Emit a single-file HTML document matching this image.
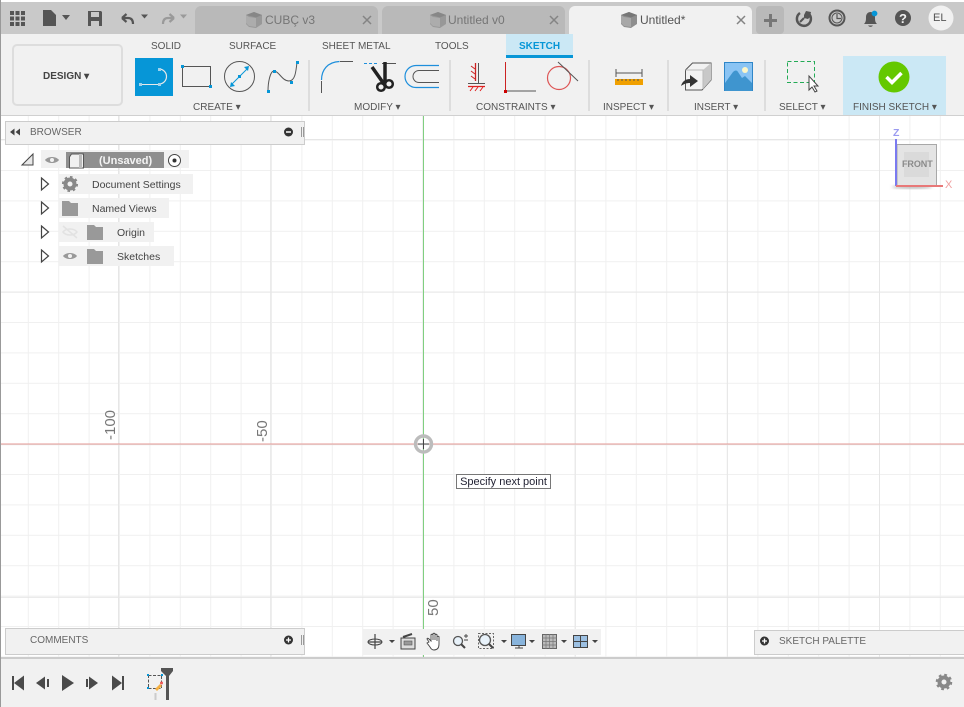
<!DOCTYPE html>
<html><head><meta charset="utf-8"><style>
html,body{margin:0;padding:0;background:#fff}
#p{position:relative;width:964px;height:707px;overflow:hidden;background:#fff;font-family:"Liberation Sans",sans-serif;color:#555}
.a{position:absolute}
.t{position:absolute;white-space:nowrap;font-size:10px;line-height:12px;color:#555}
.tab{position:absolute;top:6px;height:28px;width:183px;background:#b9b9b9;border-radius:6px 6px 0 0}
.tab span{position:absolute;top:7px;font-size:12px;line-height:15px;color:#757575}
.sep{position:absolute;top:60px;width:2px;height:51px;background:#ddd}
.row{position:absolute;background:#f1f1f1;height:20px}
svg{position:absolute;overflow:visible}
</style></head><body><div id="p">
<svg style="left:0;top:0" width="964" height="707">
<defs>
<pattern id="g" x="27.8" y="18" width="30.4" height="30.4" patternUnits="userSpaceOnUse"><path d="M.5 0V30.4M0 .5H30.4" stroke="#f0f0f0" fill="none"/></pattern>
<pattern id="m" x="118" y="139" width="152.2" height="152.6" patternUnits="userSpaceOnUse"><path d="M.5 0V153M0 .5H153" stroke="#e6e6e6" fill="none"/></pattern>
<filter id="b"><feGaussianBlur stdDeviation="1.500"/></filter>
</defs>
<rect width="964" height="707" fill="url(#g)"/><rect width="964" height="707" fill="url(#m)"/>
<path d="M423.500 115V658" stroke="#80cf80"/><path d="M0 444H964" stroke="#e59a96" stroke-width="1"/>
<circle cx="423.500" cy="444" r="8" fill="none" stroke="#bcbcbc" stroke-width="3.400"/>
<path d="M423.500 439V449M418 444H429" stroke="#444"/>
</svg>
<div class="a" style="left:0;top:0;width:1px;height:707px;background:#999;z-index:9"></div>
<div class="t" style="left:103px;top:408px;width:16px;height:32px;font-size:15px;color:#777;writing-mode:vertical-rl;transform:rotate(180deg);line-height:16px;text-align:left">-100</div>
<div class="t" style="left:255px;top:418px;width:16px;height:24px;font-size:15px;color:#777;writing-mode:vertical-rl;transform:rotate(180deg);line-height:16px">-50</div>
<div class="t" style="left:426px;top:598px;width:16px;height:18px;font-size:15px;color:#777;writing-mode:vertical-rl;transform:rotate(180deg);line-height:16px">50</div>
<div class="t" style="left:456px;top:474px;width:93px;height:13px;border:1px solid #777;background:#fff;color:#223;font-size:11px;line-height:14px;text-align:center">Specify next point</div>

<!-- top bar -->
<div class="a" style="left:0;top:0;width:964px;height:2px;background:#fff"></div>
<div class="a" style="left:0;top:2px;width:964px;height:32px;background:#c9c9c9"></div>
<svg style="left:0;top:0" width="200" height="34">
<g fill="#555"><path d="M10 11h4v4h-4zM15.500 11h4v4h-4zM21 11h4v4h-4zM10 16.500h4v4h-4zM15.500 16.500h4v4h-4zM21 16.500h4v4h-4zM10 22h4v4h-4zM15.500 22h4v4h-4zM21 22h4v4h-4z"/>
<path d="M43 10h8l5 5v11H43z"/><path d="M62 15h8l-4 5z"/>
<path d="M88 11h13l1 1v14H88zM91 12v5h8v-5zM91 21v5h8v-5z" fill-rule="evenodd"/>
<path d="M141 14.500h7l-3.500 4z"/></g>
<path d="M123 18h5c4 0 5 3 5 6M122 18l4.500-4M122 18l4.500 4" fill="none" stroke="#555" stroke-width="2.200"/>
<path d="M173 18h-5c-4 0-5 3-5 6M174 18l-4.500-4M174 18l-4.500 4" fill="none" stroke="#9a9a9a" stroke-width="2.200"/>
<path d="M180 14.500h7l-3.500 4z" fill="#9a9a9a"/>
</svg>
<div class="tab" style="left:195px"><span style="left:70px">CUBÇ v3</span></div>
<div class="tab" style="left:382px"><span style="left:66px">Untitled v0</span></div>
<div class="tab" style="left:569px;background:#f1f1f1"><span style="left:71px;color:#555">Untitled*</span></div>
<svg style="left:0;top:0" width="964" height="34">
<defs><g id="cube"><path d="M1 3l8-3 8 3v9l-6 4-7-1-3-3z" fill="#8e8e8e"/><path d="M4 5l7 1v9l-7-1-3-3V3z" fill="#a8a8a8"/><path d="M1 3l8-3 8 3-6 2.500z" fill="#777"/></g>
<g id="x"><path d="M0 0l8 8M8 0l-8 8" stroke="#848484" stroke-width="1.500"/></g></defs>
<use href="#cube" x="245" y="12" opacity=".75"/><use href="#cube" x="429" y="12" opacity=".75"/><use href="#cube" x="620" y="12"/>
<use href="#x" x="363" y="16"/><use href="#x" x="550" y="16"/><use href="#x" x="737" y="16"/>
<rect x="756" y="6" width="28" height="28" rx="4" fill="#b9b9b9"/>
<path d="M764 20.500h13M770.500 14v13" stroke="#777" stroke-width="3"/>
<path d="M800 13a7 7 0 1 0 9 1" fill="none" stroke="#555" stroke-width="2.500"/><path d="M806 11l5 1-1 5-2 2-4-1 0-3z" fill="#555"/><path d="M800 22l4-4" stroke="#555" stroke-width="2"/>
<circle cx="837" cy="18" r="7.500" fill="none" stroke="#555" stroke-width="2"/><circle cx="837" cy="18" r="5" fill="none" stroke="#555"/><path d="M837 14v4.500h4" fill="none" stroke="#555" stroke-width="1.200"/>
<path d="M864 24c2-2 2-4 2-7 0-3 2-5 4.500-5s4.500 2 4.500 5c0 3 0 5 2 7zM868 25.500a3 3 0 0 0 5 0z" fill="#555"/><circle cx="874.500" cy="13.500" r="2.900" fill="#0696d7"/>
<circle cx="903" cy="18" r="8" fill="#555"/>
<circle cx="941" cy="18" r="12.500" fill="#f1f1f1"/>
</svg>
<div class="t" style="left:899px;top:11px;font-size:13px;line-height:15px;font-weight:bold;color:#f1f1f1">?</div>
<div class="t" style="left:933px;top:12px;font-size:11px;line-height:13px;color:#555">EL</div>

<!-- ribbon -->
<div class="a" style="left:0;top:34px;width:964px;height:81px;background:#f1f1f1;border-bottom:1px solid #d0d0d0"></div>
<div class="a" style="left:12px;top:44px;width:107px;height:58px;border:2px solid #ddd;border-radius:5px"></div>
<div class="t" style="left:43px;top:71px;font-weight:bold;color:#444;font-size:10px">DESIGN ▾</div>
<div class="t" style="left:151px;top:41px">SOLID</div>
<div class="t" style="left:229px;top:41px">SURFACE</div>
<div class="t" style="left:322px;top:41px">SHEET METAL</div>
<div class="t" style="left:435px;top:41px">TOOLS</div>
<div class="a" style="left:506px;top:34px;width:67px;height:21px;background:#cbe8f5"></div>
<div class="a" style="left:506px;top:55px;width:67px;height:3px;background:#0696d7"></div>
<div class="t" style="left:519px;top:41px;font-weight:bold;color:#0696d7;font-size:10px">SKETCH</div>
<div class="a" style="left:843px;top:56px;width:103px;height:59px;background:#cbe8f5"></div>
<div class="a" style="left:135px;top:58px;width:38px;height:38px;background:#0696d7"></div>
<div class="sep" style="left:308px"></div><div class="sep" style="left:449px"></div><div class="sep" style="left:588px"></div><div class="sep" style="left:667px"></div><div class="sep" style="left:764px"></div>
<div class="t" style="left:193px;top:102px">CREATE ▾</div>
<div class="t" style="left:354px;top:102px">MODIFY ▾</div>
<div class="t" style="left:476px;top:102px">CONSTRAINTS ▾</div>
<div class="t" style="left:603px;top:102px">INSPECT ▾</div>
<div class="t" style="left:694px;top:102px">INSERT ▾</div>
<div class="t" style="left:779px;top:102px">SELECT ▾</div>
<div class="t" style="left:853px;top:102px">FINISH SKETCH ▾</div>
<svg style="left:0;top:0" width="964" height="115">
<!-- line -->
<path d="M141 84.500h18" stroke="#e8e8e8" fill="none"/><path d="M159 69a7.500 7.500 0 0 1 0 15" stroke="#e8e8e8" fill="none" stroke-width="1.200"/>
<path d="M139 83h3v3h-3zM158 83h3v3h-3zM158 68h3v3h-3z" fill="#9fd3ee"/>
<!-- rect -->
<rect x="182.500" y="66.500" width="28" height="20" fill="none" stroke="#555"/>
<path d="M181 65h3v3h-3zM209 85h3v3h-3z" fill="#0696d7"/>
<!-- circle -->
<circle cx="239.500" cy="76.500" r="15" fill="none" stroke="#555"/>
<path d="M231 85l17-17" stroke="#0696d7"/><path d="M230 87l1-5 4 4zM249 66l-1 5-4-4z" fill="#0696d7"/><rect x="238" y="75" width="3" height="3" fill="#0696d7"/>
<!-- spline -->
<path d="M268 91c0-8 2-20 6-20 5 0 8 10 15 10 6 0 7-9 8-19" fill="none" stroke="#555"/>
<path d="M267 90h3v3h-3zM273 70h3v3h-3zM290 81h3v3h-3zM296 61h3v3h-3z" fill="#0696d7"/>
<!-- fillet -->
<path d="M321.500 80c0-10 6-18 18-18.500" fill="none" stroke="#1e8fdc" stroke-width="1.200"/><path d="M321.500 81v12M340 61.500h13" stroke="#555"/>
<!-- scissors -->
<path d="M364 63.500h14" stroke="#1e8fdc" stroke-dasharray="3 2"/><path d="M382 63.500h14" stroke="#555"/>
<path d="M372 67l12 17M385 62v20" stroke="#222" stroke-width="3.500"/>
<circle cx="381" cy="87" r="3.800" fill="none" stroke="#222" stroke-width="2.500"/><circle cx="389" cy="84" r="3.800" fill="none" stroke="#222" stroke-width="2.500"/>
<!-- offset -->
<path d="M439 65.500h-23a11 11 0 0 0 0 22h23" fill="none" stroke="#1e8fdc" stroke-width="1.200"/>
<path d="M439 70.500h-20a6 6 0 0 0 0 12h20" fill="none" stroke="#555"/>
<!-- constraints -->
<path d="M478.500 63v20M468 83.500h17" stroke="#555"/><path d="M475.500 63v18" stroke="#c22" stroke-width="1.300"/><path d="M471 66l4 3M471 71l4 3M471 76l4 3" stroke="#c22"/><path d="M468 86.500h17" stroke="#e02020" stroke-width="1.200"/><path d="M470 91l3-4M475 91l3-4M480 91l3-4" stroke="#e02020"/>
<path d="M505.500 62v28" stroke="#c22"/><path d="M507 91h29" stroke="#555"/><rect x="504" y="90" width="3" height="3" fill="#c00"/>
<circle cx="559" cy="78" r="11.500" fill="none" stroke="#d55" stroke-width="1.200"/><path d="M558 62l20 19" stroke="#555"/>
<!-- inspect -->
<path d="M616 73h26M616 69v8M642 69v8" stroke="#555"/><rect x="615" y="79" width="28" height="6" fill="#f0a000"/>
<path d="M618 79v2M622 79v2M626 79v2M630 79v2M634 79v2M638 79v2" stroke="#555"/>
<!-- insert -->
<path d="M685.500 70l7-7h18.500v17l-9 10h-16.500z" fill="#f2f2f2" stroke="#555"/><path d="M703 70l8-7v17l-8 9z" fill="#c8c8c8"/><path d="M685.500 70h17.500v19" fill="none" stroke="#bbb"/>
<path d="M681 86c1-4 4-7 9-7v-4l8 6-8 6v-4c-4 0-6 1-9 3z" fill="#333"/>
<rect x="724.500" y="62.500" width="28" height="28" fill="#8ac4f4" stroke="#2f86c8"/>
<path d="M725 83l8-11c2-2 4-2 5 0l4 6 3-2 7 7v8h-27z" fill="#3f95cf"/><circle cx="745" cy="70" r="3" fill="#fdf6c8"/>
<!-- select -->
<rect x="787.500" y="61.500" width="27" height="21" fill="none" stroke="#22aa55" stroke-dasharray="4 2.500"/>
<path d="M809 76v14l3-3 3 5 2-1-3-5h4z" fill="#fff" stroke="#444"/>
<!-- finish -->
<circle cx="894" cy="77" r="15.500" fill="#64c800"/><path d="M886.500 77l5.500 5.500 9.500-9.500" fill="none" stroke="#fff" stroke-width="3.500"/>
</svg>

<!-- browser -->
<div class="a" style="left:5px;top:121px;width:298px;height:22px;background:#f1f1f1;border:1px solid #ccc"></div>
<div class="t" style="left:30px;top:127px;color:#666">BROWSER</div>
<div class="a" style="left:41px;top:150px;width:148px;height:18px;background:#f1f1f1"></div>
<div class="a" style="left:66px;top:152px;width:98px;height:16px;background:#8f8f8f"></div>
<div class="t" style="left:99px;top:155px;font-size:11px;font-weight:bold;color:#f4f4f4">(Unsaved)</div>
<div class="row" style="left:59px;top:174px;width:134px"></div>
<div class="row" style="left:59px;top:198px;width:110px"></div>
<div class="row" style="left:59px;top:222px;width:95px"></div>
<div class="row" style="left:59px;top:246px;width:115px"></div>
<div class="t" style="left:92px;top:179px;font-size:10.500px;color:#444">Document Settings</div>
<div class="t" style="left:92px;top:203px;font-size:10.500px;color:#444">Named Views</div>
<div class="t" style="left:117px;top:227px;font-size:10.500px;color:#444">Origin</div>
<div class="t" style="left:117px;top:251px;font-size:10.500px;color:#444">Sketches</div>
<svg style="left:0;top:115px" width="310" height="160">
<path d="M10 17l4.500-3.500v7zM15.500 17l4.500-3.500v7z" fill="#444"/>
<circle cx="288.500" cy="17" r="4.500" fill="#333"/><path d="M286 17h5" stroke="#fff" stroke-width="1.500"/>
<path d="M301.500 12v10M303.500 12v10" stroke="#999"/>
<path d="M22 50l11-11v11z" fill="#e8e8e8" stroke="#444"/>
<g id="e"><path d="M45 45c3-4 11-4 14 0-3 4-11 4-14 0z" fill="#999"/><circle cx="52" cy="45" r="2" fill="#f1f1f1"/></g>
<path d="M71.500 39h12v14h-14v-11z" fill="#f0f0f0" stroke="#555"/><path d="M80.500 39v14" stroke="#bbb" stroke-width="3"/>
<circle cx="174.500" cy="45.500" r="6" fill="#fff" stroke="#444"/><circle cx="174.500" cy="45.500" r="2" fill="#333"/>
<path d="M41.500 63l7 6-7 6zM41.500 87l7 6-7 6zM41.500 111l7 6-7 6zM41.500 135l7 6-7 6z" fill="#fff" stroke="#444" stroke-width="1.200"/>
<circle cx="70" cy="69" r="4.500" fill="none" stroke="#888" stroke-width="4"/><circle cx="70" cy="69" r="6.800" fill="none" stroke="#888" stroke-width="2.500" stroke-dasharray="2.500 2.800"/>
<path d="M62 86h7l2 2h7v13H62z" fill="#999"/><path d="M87 110h7l2 2h7v13H87z" fill="#999"/><path d="M87 134h7l2 2h7v13H87z" fill="#999"/>
<path d="M63 117c3-4 11-4 14 0-3 4-11 4-14 0zM63 111l14 12" fill="none" stroke="#e2e2e2" stroke-width="1.500"/>
<path d="M63 141c3-4 11-4 14 0-3 4-11 4-14 0z" fill="#999"/><circle cx="70" cy="141" r="2" fill="#f1f1f1"/>
</svg>

<!-- bottom panels -->
<div class="a" style="left:5px;top:628px;width:298px;height:25px;background:#f1f1f1;border:1px solid #ccc"></div>
<div class="t" style="left:30px;top:635px;color:#666">COMMENTS</div>
<div class="a" style="left:754px;top:630px;width:210px;height:23px;background:#f1f1f1;border:1px solid #ccc"></div>
<div class="t" style="left:779px;top:636px;color:#666">SKETCH PALETTE</div>
<div class="a" style="left:363px;top:629px;width:238px;height:26px;background:#f1f1f1"></div>
<div class="a" style="left:0;top:657px;width:964px;height:50px;background:#f1f1f1;border-top:2px solid #ccc;box-sizing:border-box"></div>
<svg style="left:0;top:0" width="964" height="707">
<circle cx="288.500" cy="640" r="4.500" fill="#333"/><path d="M286 640h5M288.500 637.500v5" stroke="#fff" stroke-width="1.300"/>
<path d="M301.500 635v10M303.500 635v10" stroke="#999"/>
<circle cx="764.500" cy="641" r="4.500" fill="#333"/><path d="M762 641h5M764.500 638.500v5" stroke="#fff" stroke-width="1.300"/>
<!-- nav bar -->
<path d="M368 642h14M375 634v15" stroke="#444" stroke-width="1.200"/><ellipse cx="375" cy="642" rx="7" ry="3" fill="none" stroke="#444"/>
<path d="M389 640h6l-3 3z M501 640h6l-3 3z M529 640h6l-3 3z M561 640h6l-3 3z M592 640h6l-3 3z" fill="#444"/>
<rect x="401" y="638" width="14" height="11" fill="#ddd" stroke="#444"/><rect x="404" y="641" width="8" height="4" fill="#999" stroke="#555" stroke-width=".6"/><path d="M403 637l9-3" stroke="#444" stroke-width="2"/>
<path d="M429 642l-2-3c0-1 1-1 2 0l2 2v-6c0-1 2-1 2 0v5-6c0-1 2-1 2 0v6-5c0-1 2-1 2 0v6-4c0-1 2-1 2 0v7c0 4-2 6-5 6-2 0-3-1-4-3l-3-4z" fill="#fff" stroke="#444" stroke-width=".9"/>
<circle cx="458" cy="641" r="4.500" fill="#e8f2fa" stroke="#555" stroke-width="1.300"/><path d="M461 644l4 4" stroke="#444" stroke-width="2"/><path d="M464 636h4M466 634v4M464 640h4" stroke="#444" stroke-width=".9"/>
<rect x="478.500" y="633.500" width="15" height="15" fill="none" stroke="#666" stroke-dasharray="2 1.500"/><circle cx="485" cy="640" r="5.500" fill="#e8f2fa" stroke="#555" stroke-width="1.300"/><path d="M489 644l4 4" stroke="#444" stroke-width="2"/>
<rect x="511.500" y="634.500" width="14" height="11" fill="#88b4dc" stroke="#444"/><path d="M515 648h8M519 646v2" stroke="#444"/>
<rect x="542.500" y="634.500" width="14" height="14" fill="#bbb" stroke="#666"/><path d="M546 634v15M549.500 634v15M553 634v15M542 638h15M542 641.500h15M542 645h15" stroke="#777" stroke-width=".7"/>
<rect x="573.500" y="635.500" width="14" height="12" fill="#9cc0e2" stroke="#444"/><path d="M580.500 635v13M573 641.500h15" stroke="#444"/>
<!-- timeline -->
<path d="M13 676v14" stroke="#4a4a4a" stroke-width="2"/><path d="M24 675.500v15l-10-7.500z" fill="#4a4a4a"/>
<path d="M36 683l9-6.500v13z" fill="#4a4a4a"/><path d="M48 679v8" stroke="#4a4a4a" stroke-width="2"/>
<path d="M62 675v16l12-8z" fill="#4a4a4a"/>
<path d="M87 679v8" stroke="#4a4a4a" stroke-width="2"/><path d="M89 676.500v13l9-6.500z" fill="#4a4a4a"/>
<path d="M112 675.500v15l10-7.500z" fill="#4a4a4a"/><path d="M123 676v14" stroke="#4a4a4a" stroke-width="2"/>
<rect x="148.500" y="675.500" width="13" height="13" fill="none" stroke="#555" stroke-dasharray="3 1.500"/>
<path d="M147 674h2v2h-2zM161 674h2v2h-2zM147 687h2v2h-2z" fill="#0696d7"/>
<path d="M155 689l5-5 2 2-5 5z" fill="#f5b041"/><circle cx="161.500" cy="683" r="1.500" fill="#e55"/>
<path d="M155.500 693v7" stroke="#ccc" stroke-width="2"/>
<path d="M161 668h12v3l-4 5v24h-3v-24l-5-5z" fill="#555"/>
<circle cx="944" cy="682" r="4.500" fill="none" stroke="#888" stroke-width="4"/><circle cx="944" cy="682" r="7" fill="none" stroke="#888" stroke-width="2.500" stroke-dasharray="2.700 2.800"/>
<!-- viewcube -->
<ellipse cx="912" cy="187" rx="20" ry="2" fill="#bbb" filter="url(#b)"/>
<rect x="897" y="144.500" width="39.500" height="41" fill="#e4e4e4" stroke="#a8a8a8"/><rect x="904" y="152" width="25" height="25" fill="#dadada"/>
<path d="M896 139v47" stroke="#7a7af0" stroke-width="2"/><path d="M896 186h47" stroke="#e87878" stroke-width="2"/>
</svg>
<div class="t" style="left:902px;top:159px;font-size:9.500px;letter-spacing:-.1px;transform:scaleX(.95);transform-origin:0 50%;color:#8a8a8a;font-weight:bold">FRONT</div>
<div class="t" style="left:893px;top:127px;font-size:10.500px;font-weight:bold;color:#9a9af0">Z</div>
<div class="t" style="left:945px;top:179px;font-size:11px;color:#f0a0a0">X</div>
</div></body></html>
